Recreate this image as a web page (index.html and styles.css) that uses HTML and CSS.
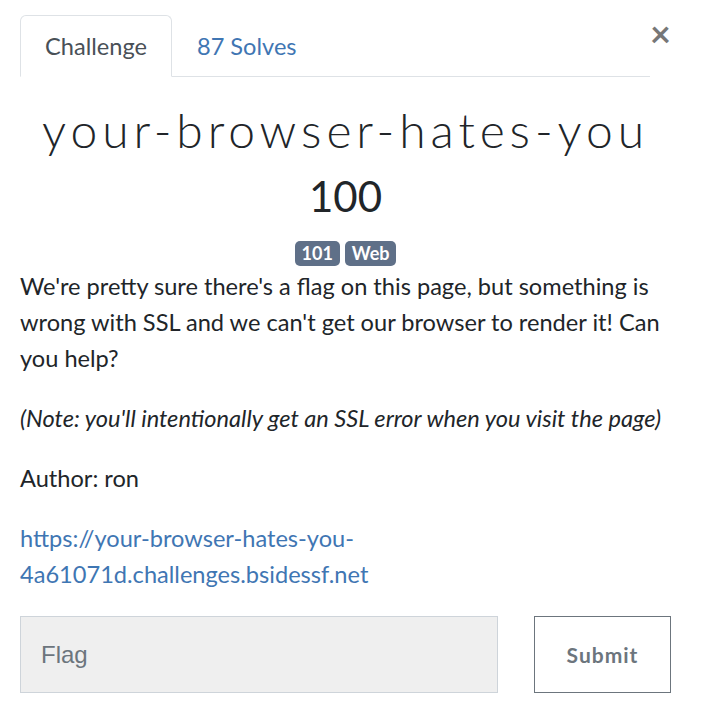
FILE: index.html
```html
<!DOCTYPE html>
<html>
<head>
<meta charset="utf-8">
<link rel="stylesheet" href="styles.css">
</head>
<body>
<div class="modal">
  <div class="top">
    <ul class="tabs">
      <li class="tab active">Challenge</li>
      <li class="tab">87 Solves</li>
    </ul>
    <span class="close">&times;</span>
  </div>
  <h2 class="name">your-browser-hates-you</h2>
  <h3 class="value">100</h3>
  <div class="tags"><span class="badge">101</span><span class="badge">Web</span></div>
  <p>We're pretty sure there's a flag on this page, but something is wrong with SSL and we can't get our browser to render it! Can you help?</p>
  <p><em>(Note: you'll intentionally get an SSL error when you visit the page)</em></p>
  <p>Author: ron</p>
  <p><a class="link" href="#">https://your-browser-hates-you-4a61071d.challenges.bsidessf.net</a></p>
  <div class="form">
    <div class="input">Flag</div>
    <div class="submit">Submit</div>
  </div>
</div>
</body>
</html>
```
FILE: styles.css
```css
html, body { margin: 0; padding: 0; background: #fff; }
body { font-family: Lato, "Open Sans", sans-serif; font-size: 23.6px; line-height: 36px; color: #212529; }
.modal { padding: 15px 30px 0 20px; width: 651px; }
.top { display: flex; align-items: flex-start; }
.tabs { list-style: none; margin: 0; padding: 0; display: flex; flex: 0 0 630px; border-bottom: 1px solid #dee2e6; }
.tab { padding: 12px 24px 12px 24px; border: 1px solid transparent; border-top-left-radius: 6px; border-top-right-radius: 6px; margin-bottom: -1px; color: #3f76b3; }
.tab.active { color: #495057; border-color: #dee2e6 #dee2e6 #fff; background: #fff; }
.close { margin-left: auto; margin-right: 3px; margin-top: 0; font-size: 36px; font-weight: 700; line-height: 1; color: #777; }
.name { font-family: Lato, sans-serif; font-weight: 300; font-size: 48px; line-height: 1.2; letter-spacing: 4.9px; text-align: center; margin: 0 0 12px; padding-top: 24px; }
.value { font-weight: 400; font-size: 42px; line-height: 1.2; text-align: center; margin: 0 0 20px; }
.tags { display: flex; justify-content: center; gap: 5px; margin-bottom: 2px; }
.badge { background: #5f7088; color: #fff; font-weight: 700; font-size: 18px; line-height: 19px; padding: 3px 7px; border-radius: 5px; }
p { margin: 0 0 24px; }
.link { color: #3f76b3; text-decoration: none; }
.form { display: flex; justify-content: space-between; }
.input { width: 456px; height: 75px; background: #efefef; border: 1px solid #ced4da; padding: 0 0 0 20px; font-family: "Liberation Sans", Arial, sans-serif; font-size: 24px; line-height: 75px; color: #6c757d; }
.submit { width: 135px; height: 75px; border: 1px solid #6c757d; font-weight: 700; font-size: 21px; letter-spacing: 1px; line-height: 75px; text-align: center; color: #6c757d; }
```
